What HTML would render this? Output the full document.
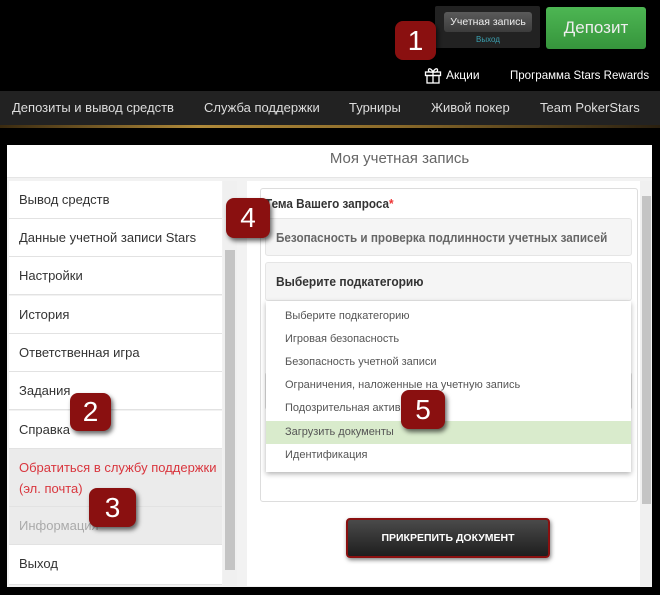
<!DOCTYPE html>
<html><head><meta charset="utf-8"><style>
*{margin:0;padding:0;box-sizing:border-box}
body{width:660px;height:595px;background:#000;position:relative;overflow:hidden;font-family:"Liberation Sans","DejaVu Sans",sans-serif;}
.a{position:absolute}
.n{display:inline-block;white-space:nowrap;transform-origin:left center}
.badge{position:absolute;background:#8a1010;color:#fff;font-size:28px;text-align:center;border-radius:8px;box-shadow:2px 3px 5px rgba(0,0,0,.6);font-family:"Liberation Sans",sans-serif}
.mi{position:absolute;left:9px;width:213px;height:38px;border-bottom:1px solid #e2e2e2;background:#fff;font-size:13px;color:#333;padding-left:10px;line-height:38px;white-space:nowrap}
.dd{position:absolute;left:0;width:100%;height:23px;line-height:23px;padding-left:19px;font-size:11px;color:#555;white-space:nowrap}
</style></head><body>
<div class="a" style="left:435px;top:6px;width:105px;height:42px;background:#222;border-radius:2px"></div>
<div class="a" style="left:444px;top:12px;width:88px;height:20px;background:linear-gradient(#5a5a5a,#3c3c3c);border-radius:3px;color:#eee;font-size:10.5px;text-align:center;line-height:20px">Учетная запись</div>
<div class="a" style="left:444px;top:35px;width:88px;text-align:center;color:#3aa0b0;font-size:8px">Выход</div>
<div class="a" style="left:546px;top:7px;width:100px;height:42px;background:linear-gradient(#4db653,#36953c);border-radius:3px;color:#eee;font-size:17px;text-align:center;line-height:42px">Депозит</div>
<svg class="a" style="left:424px;top:67px" width="18" height="17" viewBox="0 0 18 17"><g fill="none" stroke="#fff" stroke-width="1.3"><rect x="1.5" y="5" width="15" height="3.5"/><rect x="3" y="8.5" width="12" height="7.5"/><path d="M9 5v11M9 5C7 1 4 1 4.5 3.5S8 5 9 5C11 1 14 1 13.5 3.5S10 5 9 5"/></g></svg>
<div class="a" style="left:446px;top:68px;color:#fff;font-size:12px">Акции</div>
<div class="a" style="left:510px;top:68px;color:#fff;font-size:12px;white-space:nowrap"><span class="n" style="transform:scaleX(.96)">Программа Stars Rewards</span></div>
<div class="a" style="left:0;top:91px;width:660px;height:34px;background:#222;color:#ddd;font-size:13px;line-height:34px">
<span class="a" style="left:12px">Депозиты и вывод средств</span>
<span class="a" style="left:204px">Служба поддержки</span>
<span class="a" style="left:349px">Турниры</span>
<span class="a" style="left:431px">Живой покер</span>
<span class="a" style="left:540px">Team PokerStars</span>
</div>
<div class="a" style="left:0;top:125px;width:660px;height:3px;background:linear-gradient(90deg,#3a2a10,#b08a3a 30%,#8a6a2a 60%,#2a2010)"></div>
<div class="a" style="left:7px;top:145px;width:645px;height:442px;background:#f2f2f2"></div>
<div class="a" style="left:7px;top:145px;width:645px;height:33px;background:#fff;border-bottom:1px solid #e5e5e5;text-align:center;color:#666;font-size:15px;line-height:27px;padding-left:140px">Моя учетная запись</div>
<div class="mi" style="top:181px">Вывод средств</div>
<div class="mi" style="top:219px">Данные учетной записи Stars</div>
<div class="mi" style="top:257px">Настройки</div>
<div class="mi" style="top:296px">История</div>
<div class="mi" style="top:334px">Ответственная игра</div>
<div class="mi" style="top:372px">Задания</div>
<div class="mi" style="top:411px">Справка</div>
<div class="mi" style="top:449px;height:58px;background:#ebebeb;color:#d9363e;line-height:21px;padding-top:8px">Обратиться в службу поддержки<br>(эл. почта)</div>
<div class="mi" style="top:507px;background:#ebebeb;color:#aaa">Информация</div>
<div class="mi" style="top:545px;height:40px">Выход</div>
<div class="a" style="left:223px;top:181px;width:14px;height:405px;background:#f0f0f0"></div>
<div class="a" style="left:225px;top:250px;width:10px;height:320px;background:#c4c4c4"></div>
<div class="a" style="left:247px;top:181px;width:393px;height:405px;background:#fff"></div>
<div class="a" style="left:640px;top:181px;width:12px;height:405px;background:#f0f0f0"></div>
<div class="a" style="left:642px;top:196px;width:9px;height:308px;background:#c4c4c4"></div>
<div class="a" style="left:260px;top:188px;width:378px;height:314px;border:1px solid #ddd;border-radius:3px"></div>
<div class="a" style="left:265px;top:196px;font-size:13px;font-weight:bold;color:#333"><span class="n" style="transform:scaleX(.9)">Тема Вашего запроса<span style="color:#e33">*</span></span></div>
<div class="a" style="left:265px;top:218px;width:367px;height:38px;background:#f5f5f5;border:1px solid #e5e5e5;border-radius:3px;font-size:13px;font-weight:bold;color:#666;line-height:38px;padding-left:10px;overflow:hidden"><span class="n" style="transform:scaleX(.9)">Безопасность и проверка подлинности учетных записей</span></div>
<div class="a" style="left:265px;top:262px;width:367px;height:39px;background:#f5f5f5;border:1px solid #e5e5e5;border-radius:3px;font-size:13px;font-weight:bold;color:#333;line-height:38px;padding-left:10px"><span class="n" style="transform:scaleX(.92)">Выберите подкатегорию</span></div>
<div class="a" style="left:265px;top:372px;width:367px;height:38px;border:1px solid #ddd;border-radius:3px"></div>
<div class="a" style="left:266px;top:301px;width:365px;height:171px;background:#fff;box-shadow:0 2px 5px rgba(0,0,0,.3)">
<div class="dd" style="top:4px">Выберите подкатегорию</div>
<div class="dd" style="top:27px">Игровая безопасность</div>
<div class="dd" style="top:50px">Безопасность учетной записи</div>
<div class="dd" style="top:73px">Ограничения, наложенные на учетную запись</div>
<div class="dd" style="top:96px">Подозрительная активность</div>
<div class="dd" style="top:120px;background:#d9ebcc">Загрузить документы</div>
<div class="dd" style="top:143px">Идентификация</div>
</div>
<div class="a" style="left:346px;top:518px;width:204px;height:40px;background:linear-gradient(#4a4a4a,#1e1e1e);border:2px solid #8a1010;border-radius:4px;color:#fff;font-size:10.5px;font-weight:bold;text-align:center;line-height:36px;box-shadow:1px 2px 4px rgba(0,0,0,.5)">ПРИКРЕПИТЬ ДОКУМЕНТ</div>
<div class="badge" style="left:395px;top:21px;width:41px;height:39px;line-height:39px">1</div>
<div class="badge" style="left:70px;top:393px;width:41px;height:38px;line-height:38px">2</div>
<div class="badge" style="left:89px;top:488px;width:47px;height:39px;line-height:39px">3</div>
<div class="badge" style="left:226px;top:198px;width:44px;height:40px;line-height:40px">4</div>
<div class="badge" style="left:401px;top:390px;width:44px;height:39px;line-height:39px">5</div>
</body></html>
